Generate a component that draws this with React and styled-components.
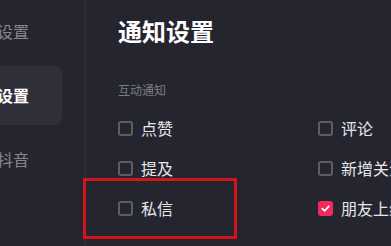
import React from "react";
import styled, { createGlobalStyle } from "styled-components";

const Global = createGlobalStyle`
  html, body { margin: 0; padding: 0; background: #252530; }
  body { font-family: "Noto Sans CJK SC", "Noto Sans", sans-serif; }
`;

const Page = styled.div`
  position: relative;
  display: flex;
  width: 391px;
  height: 246px;
  overflow: hidden;
  background: #252530;
`;

const Sidebar = styled.nav`
  flex: 0 0 134px;
  margin-left: -48px;
  border-right: 1px solid #30303a;
  display: flex;
  flex-direction: column;
  gap: 5px;
  padding-top: 2px;
  box-sizing: border-box;
`;

const SideItem = styled.div`
  width: 110px;
  height: 59px;
  box-sizing: border-box;
  padding-left: 13px;
  border-radius: 8px;
  font-size: 16px;
  line-height: 59px;
  white-space: nowrap;
  color: ${(p) => (p.$active ? "#ffffff" : "#86868e")};
  font-weight: ${(p) => (p.$active ? 700 : 400)};
  background: ${(p) => (p.$active ? "#2f2f39" : "transparent")};
`;

const Main = styled.main`
  flex: 1;
  padding: 19px 0 0 32px;
  display: flex;
  flex-direction: column;
`;

const Title = styled.h1`
  margin: 0;
  font-size: 24px;
  line-height: 24px;
  font-weight: 700;
  color: #ffffff;
`;

const Section = styled.div`
  margin-top: 41px;
  font-size: 12px;
  line-height: 12px;
  color: #7e7e86;
`;

const Grid = styled.div`
  margin-top: 12px;
  display: grid;
  grid-template-columns: 200px 200px;
  grid-auto-rows: 40px;
`;

const Option = styled.label`
  display: flex;
  align-items: center;
  gap: 8px;
  font-size: 16px;
  color: #e6e6ea;
  white-space: nowrap;
`;

const Box = styled.span`
  width: 15px;
  height: 15px;
  box-sizing: border-box;
  border-radius: 3px;
  display: flex;
  align-items: center;
  justify-content: center;
  border: ${(p) => (p.$checked ? "none" : "2px solid #5e5e67")};
  background: ${(p) => (p.$checked ? "#f2295a" : "transparent")};
`;

const Highlight = styled.div`
  position: absolute;
  left: 83px;
  top: 178px;
  width: 154px;
  height: 61px;
  box-sizing: border-box;
  border: 3px solid #d4131b;
  pointer-events: none;
`;

const Check = ({ checked, label }) => (
  <Option>
    <Box $checked={checked}>
      {checked && (
        <svg width="11" height="11" viewBox="0 0 10 10">
          <path d="M2 5.2 L4.2 7.2 L8 3" fill="none" stroke="#fff" strokeWidth="1.6" strokeLinecap="round" strokeLinejoin="round" />
        </svg>
      )}
    </Box>
    {label}
  </Option>
);

export default function App() {
  return (
    <>
      <Global />
      <Page>
        <Sidebar>
          <SideItem>隐私设置</SideItem>
          <SideItem $active>通知设置</SideItem>
          <SideItem>关于抖音</SideItem>
        </Sidebar>
        <Main>
          <Title>通知设置</Title>
          <Section>互动通知</Section>
          <Grid>
            <Check label="点赞" />
            <Check label="评论" />
            <Check label="提及" />
            <Check label="新增关注" />
            <Check label="私信" />
            <Check label="朋友上线" checked />
          </Grid>
        </Main>
        <Highlight />
      </Page>
    </>
  );
}
